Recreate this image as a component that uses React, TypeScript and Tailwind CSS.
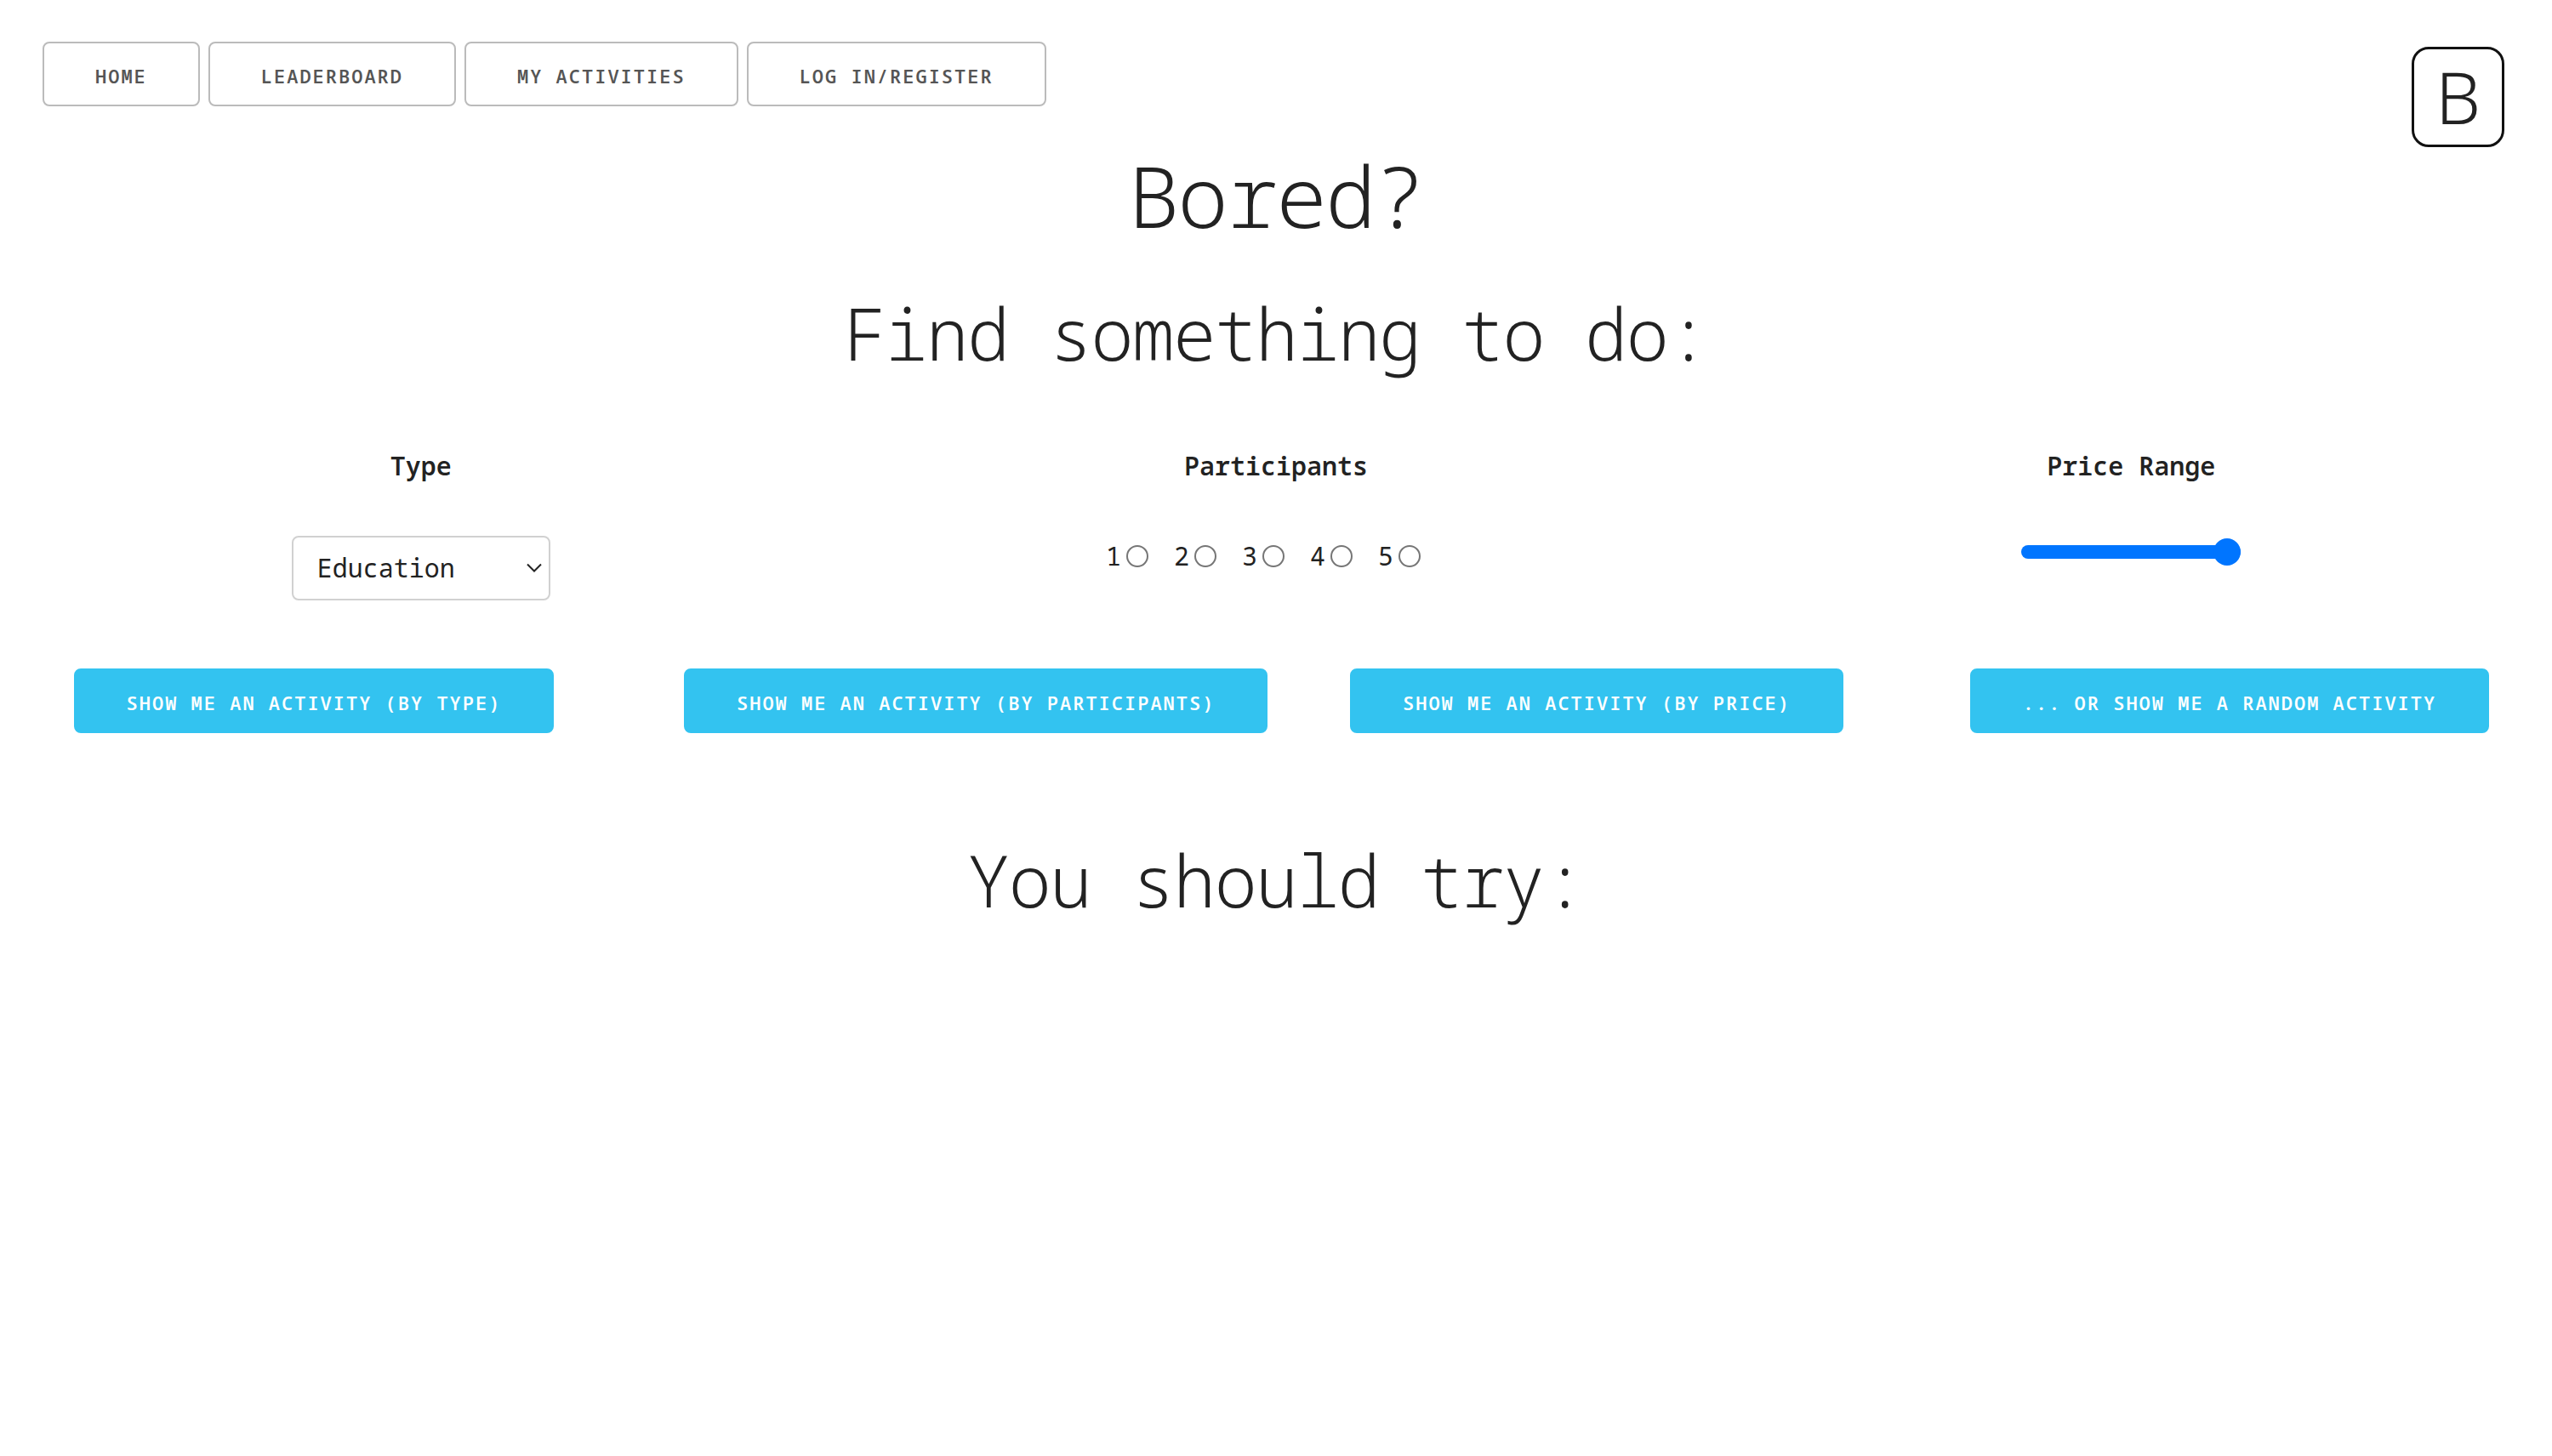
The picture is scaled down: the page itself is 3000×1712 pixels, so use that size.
import type { ReactNode } from "react";

const navLinks = ["Home", "Leaderboard", "My Activities", "Log in/Register"];
const activityTypes = ["Education", "Recreational", "Social", "DIY", "Charity", "Cooking", "Relaxation", "Music", "Busywork"];
const participantCounts = [1, 2, 3, 4, 5];
const actions = [
  { text: "Show me an activity (by type)", place: "justify-center" },
  { text: "Show me an activity (by participants)", place: "justify-start" },
  { text: "Show me an activity (by price)", place: "justify-center" },
  { text: "... or show me a random activity", place: "justify-center pr-5" },
];

function Heading({ children }: { children: ReactNode }) {
  return <h2 className="text-center text-[84px] leading-[106px] font-light tracking-[-2px]">{children}</h2>;
}

export default function App() {
  return (
    <div className="min-h-screen bg-white px-[50px] pt-[49px] font-['Noto_Sans_Mono','DejaVu_Sans_Mono',monospace] text-[30px] leading-[48px] text-[#222]">
      <header className="flex items-start justify-between">
        <nav className="flex flex-wrap gap-[10px]">
          {navLinks.map((link) => (
            <a
              key={link}
              href="#"
              className="h-[76px] rounded-lg border-2 border-[#bbb] px-[60px] text-[22px] leading-[76px] font-semibold tracking-[2px] whitespace-nowrap text-[#555] uppercase"
            >
              {link}
            </a>
          ))}
        </nav>
        <a
          href="#"
          aria-label="Bored home"
          className="mt-[6px] mr-[6px] flex h-[118px] w-[109px] items-center justify-center rounded-[20px] border-[3px] border-[#111] font-['Noto_Sans',sans-serif] text-[84px] leading-none font-light"
        >
          B
        </a>
      </header>

      <main>
        <h1 className="text-center text-[100px] leading-[112px] font-light tracking-[-2px]">Bored?</h1>
        <div className="mt-[54px]">
          <Heading>Find something to do:</Heading>
        </div>

        <form>
          <div className="mt-[79px] grid grid-cols-3 gap-x-[116px]">
            <div className="flex flex-col items-center">
              <label htmlFor="type" className="font-semibold">Type</label>
              <div className="relative mt-[58px]">
                <select
                  id="type"
                  className="h-[76px] w-[304px] appearance-none rounded-lg border-2 border-[#d1d1d1] bg-white px-7"
                >
                  {activityTypes.map((type) => (
                    <option key={type}>{type}</option>
                  ))}
                </select>
                <svg className="pointer-events-none absolute top-8 right-[10px] h-3 w-[18px]" viewBox="0 0 18 12" fill="none" stroke="#222" strokeWidth="2">
                  <path d="M1 1.5 9 9.5 17 1.5" />
                </svg>
              </div>
            </div>

            <fieldset className="flex flex-col items-center">
              <legend className="mx-auto font-semibold">Participants</legend>
              <div className="mt-[58px] flex">
                {participantCounts.map((count) => (
                  <label key={count} className="flex w-20 items-center gap-[6px]">
                    {count}
                    <input
                      type="radio"
                      name="participants"
                      className="size-[26px] appearance-none rounded-full border-2 border-[#767676] checked:bg-[#0075ff]"
                    />
                  </label>
                ))}
              </div>
            </fieldset>

            <div className="flex flex-col items-center">
              <label htmlFor="price" className="font-semibold">Price Range</label>
              <input
                id="price"
                type="range"
                min="0"
                max="100"
                defaultValue="100"
                className="mt-[61px] h-8 w-[258px] appearance-none bg-transparent [&::-webkit-slider-runnable-track]:h-4 [&::-webkit-slider-runnable-track]:rounded-full [&::-webkit-slider-runnable-track]:bg-[#0075ff] [&::-webkit-slider-thumb]:-mt-2 [&::-webkit-slider-thumb]:size-8 [&::-webkit-slider-thumb]:appearance-none [&::-webkit-slider-thumb]:rounded-full [&::-webkit-slider-thumb]:bg-[#0075ff]"
              />
            </div>
          </div>

          <div className="mt-20 grid grid-cols-4 gap-x-[116px]">
            {actions.map((action) => (
              <div key={action.text} className={`flex min-w-0 ${action.place}`}>
                <button
                  type="button"
                  className="h-[76px] shrink-0 rounded-lg border-2 border-[#33c3f0] bg-[#33c3f0] px-[60px] text-[22px] leading-[76px] font-semibold tracking-[2px] whitespace-nowrap text-white uppercase"
                >
                  {action.text}
                </button>
              </div>
            ))}
          </div>
        </form>

        <div className="mt-[120px]">
          <Heading>You should try:</Heading>
        </div>
      </main>
    </div>
  );
}
